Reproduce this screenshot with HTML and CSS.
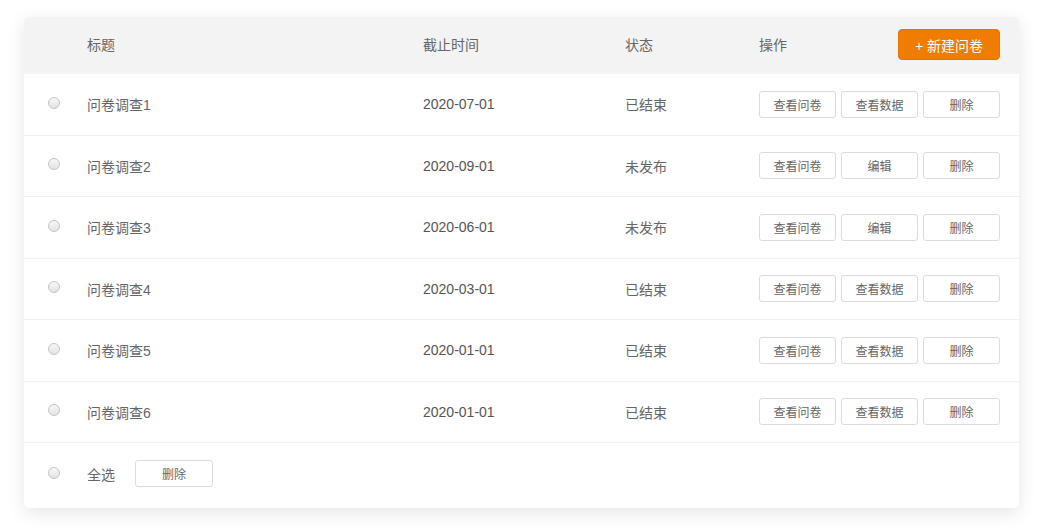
FILE: index.html
```html
<!DOCTYPE html>
<html lang="zh-CN">
<head>
    <meta charset="UTF-8">
    <meta name="viewport" content="width=device-width, initial-scale=1.0">
    <title>问卷列表</title>
    <link rel="stylesheet" href="styles.css">
</head>
<body>
    <main class="card">
        <div class="row head">
            <span></span>
            <span>标题</span>
            <span>截止时间</span>
            <span>状态</span>
            <div class="ops">
                <span class="ops-title">操作</span>
                <button class="btn-new">+ 新建问卷</button>
            </div>
        </div>

        <div class="row">
            <span class="radio"></span>
            <span>问卷调查1</span>
            <span class="date">2020-07-01</span>
            <span>已结束</span>
            <div class="ops">
                <button class="btn">查看问卷</button>
                <button class="btn">查看数据</button>
                <button class="btn">删除</button>
            </div>
        </div>
        <div class="row">
            <span class="radio"></span>
            <span>问卷调查2</span>
            <span class="date">2020-09-01</span>
            <span>未发布</span>
            <div class="ops">
                <button class="btn">查看问卷</button>
                <button class="btn">编辑</button>
                <button class="btn">删除</button>
            </div>
        </div>
        <div class="row">
            <span class="radio"></span>
            <span>问卷调查3</span>
            <span class="date">2020-06-01</span>
            <span>未发布</span>
            <div class="ops">
                <button class="btn">查看问卷</button>
                <button class="btn">编辑</button>
                <button class="btn">删除</button>
            </div>
        </div>
        <div class="row">
            <span class="radio"></span>
            <span>问卷调查4</span>
            <span class="date">2020-03-01</span>
            <span>已结束</span>
            <div class="ops">
                <button class="btn">查看问卷</button>
                <button class="btn">查看数据</button>
                <button class="btn">删除</button>
            </div>
        </div>
        <div class="row">
            <span class="radio"></span>
            <span>问卷调查5</span>
            <span class="date">2020-01-01</span>
            <span>已结束</span>
            <div class="ops">
                <button class="btn">查看问卷</button>
                <button class="btn">查看数据</button>
                <button class="btn">删除</button>
            </div>
        </div>
        <div class="row">
            <span class="radio"></span>
            <span>问卷调查6</span>
            <span class="date">2020-01-01</span>
            <span>已结束</span>
            <div class="ops">
                <button class="btn">查看问卷</button>
                <button class="btn">查看数据</button>
                <button class="btn">删除</button>
            </div>
        </div>

        <div class="foot">
            <span class="radio"></span>
            <span class="all">全选</span>
            <button class="btn">删除</button>
        </div>
    </main>
</body>
</html>
```

FILE: styles.css
```css
*, *::before, *::after
{
    box-sizing: border-box;
    margin: 0;
    padding: 0;
}
html
{
    height: 100%;
}
body
{
    min-height: 100%;
    background: #ffffff;
    padding: 17px 23px 24px 24px;
    font-family: "Liberation Sans", "Noto Sans CJK SC", sans-serif;
    font-size: 14px;
    color: #666666;
}
.card
{
    width: 995px;
    background: #ffffff;
    border-radius: 5px;
    overflow: hidden;
    box-shadow: 0 5px 18px rgba(0, 0, 0, 0.1);
}
.row
{
    display: grid;
    grid-template-columns: 63px 336px 202px 134px 1fr;
    align-items: center;
    height: 61.5px;
    border-bottom: 1px solid #f0f0f0;
}
.head
{
    height: 57px;
    padding-bottom: 3px;
    background: #f3f3f3;
    border-bottom: none;
    color: #666666;
}
.ops
{
    display: flex;
    align-items: center;
    gap: 5px;
}
.head .ops
{
    justify-content: space-between;
    padding-right: 19px;
}
.head .btn-new
{
    margin-top: 1px;
}
.btn-new
{
    width: 102px;
    height: 31px;
    border: 1px solid #e87300;
    border-radius: 4px;
    background: #f07c00;
    color: #ffffff;
    font-family: inherit;
    font-size: 14px;
}
.btn
{
    width: 77px;
    height: 27px;
    border: 1px solid #dcdcdc;
    border-radius: 3px;
    background: #ffffff;
    color: #666666;
    font-family: inherit;
    font-size: 12px;
}
.radio
{
    justify-self: start;
    margin-left: 24px;
    margin-top: -3px;
    width: 12px;
    height: 12px;
    border: 1px solid #c4c4c4;
    border-radius: 50%;
    background: linear-gradient(#f7f7f7, #e3e3e3);
}
.date
{
    color: #555555;
}
.foot
{
    display: flex;
    align-items: center;
    height: 65px;
    padding-bottom: 4px;
}
.foot .radio
{
    margin-top: -2px;
}
.foot .btn
{
    width: 78px;
}
.all
{
    margin-left: 27px;
    margin-right: 20px;
}
```
